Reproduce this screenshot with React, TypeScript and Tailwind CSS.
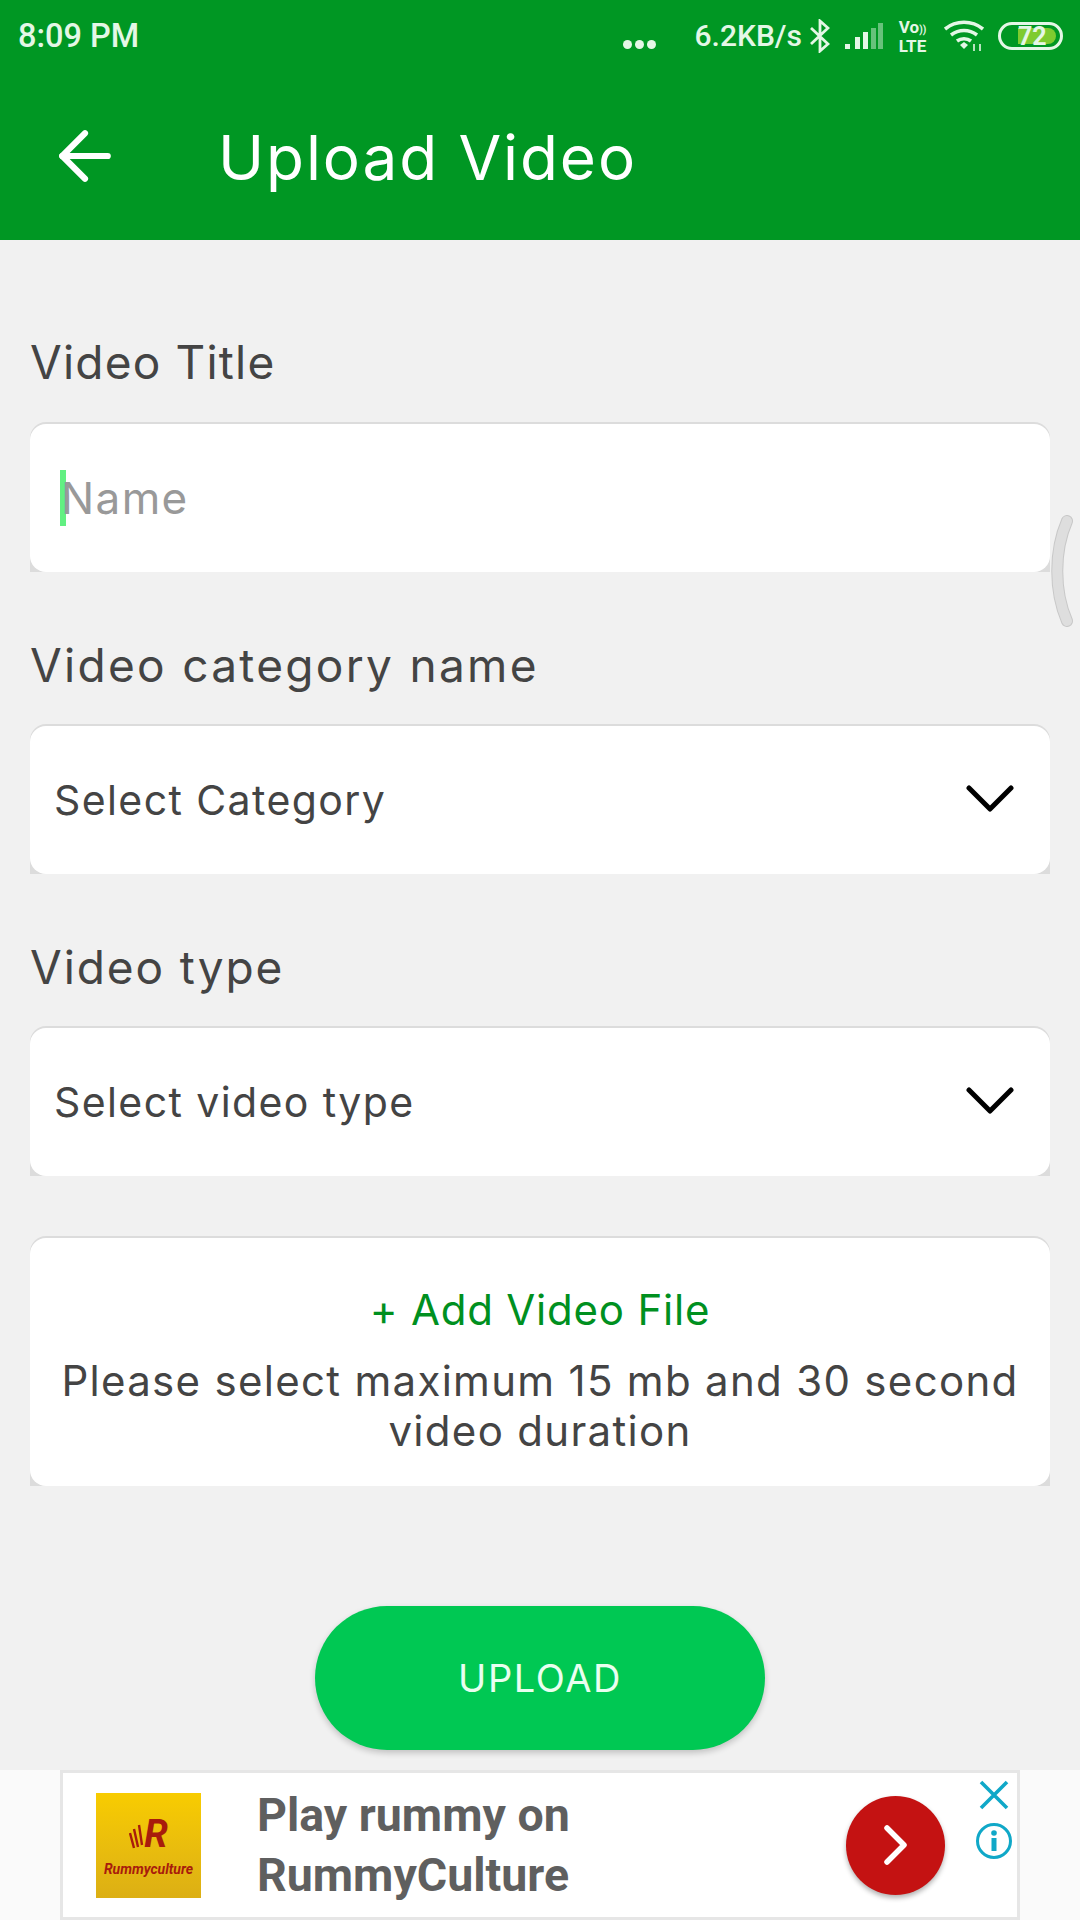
import type { ReactNode } from 'react';
import { ArrowLeft } from 'lucide-react';

const font = "font-['Inter','Liberation_Sans',sans-serif]";

function StatusBar() {
  return (
    <div className="flex h-[72px] items-center pl-[18px] pr-[17px] text-[#e4f7e6]">
      <span className="font-['Roboto',sans-serif] text-[32.5px] font-medium leading-none">8:09 PM</span>
      <div className="ml-auto flex items-center">
        <div className="mr-[39px] mt-[16px] flex gap-[3px]">
          <span className="h-[9px] w-[9px] rounded-full bg-[#e4f7e6]" />
          <span className="h-[9px] w-[9px] rounded-full bg-[#e4f7e6]" />
          <span className="h-[9px] w-[9px] rounded-full bg-[#e4f7e6]" />
        </div>
        <span className="font-['Roboto',sans-serif] text-[30px] font-medium leading-none">6.2KB/s</span>
        <svg className="ml-[8px]" width="20" height="34" viewBox="0 0 20 34" fill="none" stroke="#e4f7e6" strokeWidth="2.8">
          <path d="M1 9l17 16-8 7V2l8 7L1 25" />
        </svg>
        <svg className="ml-[15px]" width="38" height="28" viewBox="0 0 38 28" fill="#e4f7e6">
          <rect x="0" y="22" width="5" height="5" />
          <rect x="10" y="15" width="5" height="12" />
          <rect x="18" y="10" width="5" height="17" />
          <rect x="26" y="6" width="5" height="21" opacity="0.45" />
          <rect x="33" y="1" width="5" height="26" opacity="0.45" />
        </svg>
        <div className="ml-[14px] w-[31px] text-center font-['Roboto',sans-serif] text-[17px] font-bold leading-[16px]">
          <div>
            Vo<span className="text-[10px]">))</span>
          </div>
          <div>LTE</div>
        </div>
        <svg className="ml-[16px]" width="40" height="32" viewBox="0 0 40 32" fill="none" stroke="#e4f7e6" strokeWidth="3.6">
          <path d="M1 9c11-9 27-9 38 0" />
          <path d="M7 15c8-6 18-6 26 0" />
          <path d="M13 21c4-3 10-3 14 0" />
          <path d="M16 25l4 4 4-4-4-3z" fill="#e4f7e6" stroke="none" />
          <path d="M30 24v7M36 24v7" strokeWidth="1.6" />
        </svg>
        <div className="relative ml-[14px] flex h-[28px] w-[65px] items-center rounded-full border-[3px] border-[#e4f7e6] p-[3px]">
          <div className="ml-[14px] h-full w-[38px] rounded-r-full bg-[#7ecb2f]" />
          <span className="absolute left-[17px] top-[-2px] font-['Roboto',sans-serif] text-[25px] font-bold leading-[27px]">72</span>
        </div>
      </div>
    </div>
  );
}

// grey wrapper only shows as the top hairline and the bottom corners
function Card({ children }: { children: ReactNode }) {
  return (
    <div className="rounded-t-[16px] bg-[#dcdcdc] pt-[2px]">
      <div className="rounded-[16px] bg-white">{children}</div>
    </div>
  );
}

function SelectCard({ label }: { label: string }) {
  return (
    <Card>
      <div className="flex h-[148px] items-center justify-between pl-[24px] pr-[36px]">
        <span className="text-[41px] leading-none tracking-[1.4px] text-[#444444]">{label}</span>
        <svg className="mb-[4px]" width="48" height="30" viewBox="0 0 48 30" fill="none" stroke="black" strokeWidth="5" strokeLinecap="round" strokeLinejoin="round">
          <path d="M3 5l21 21L45 5" />
        </svg>
      </div>
    </Card>
  );
}

export default function App() {
  return (
    <div className={`${font} relative flex h-[1920px] w-[1080px] flex-col overflow-hidden bg-[#f1f1f1]`}>
      {/* Header */}
      <div className="h-[240px] bg-[#009723]">
        <StatusBar />
        <div className="flex h-[168px] items-center pl-[46px]">
          <ArrowLeft size={78} strokeWidth={1.9} className="text-white" />
          <h1 className="ml-[94px] pt-[4px] text-[62px] font-normal leading-none tracking-[1.9px] text-white">Upload Video</h1>
        </div>
      </div>

      {/* Form */}
      <div className="flex flex-1 flex-col px-[30px]">
        <p className="mt-[110px] h-[72px] text-[46px] leading-[24px] tracking-[1.2px] text-[#444444]">Video Title</p>
        <Card>
          <div className="flex h-[148px] items-center pl-[30px]">
            <div className="h-[56px] w-[6px] bg-[#62f082]" />
            <span className="ml-[-5px] text-[44px] leading-none tracking-[1.4px] text-[#999999]">Name</span>
          </div>
        </Card>

        <p className="mt-[80px] h-[72px] text-[46px] leading-[26px] tracking-[2.3px] text-[#444444]">Video category name</p>
        <SelectCard label="Select Category" />

        <p className="mt-[80px] h-[72px] text-[46px] leading-[26px] tracking-[1.9px] text-[#444444]">Video type</p>
        <SelectCard label="Select video type" />

        <div className="mt-[60px]">
          <Card>
            <div className="flex h-[248px] flex-col items-center pt-[47px] text-center">
              <span className="text-[42px] leading-[50px] tracking-[0.8px] text-[#00901f]">+ Add Video File</span>
              <p className="mt-[21px] w-[980px] text-[42px] leading-[50px] tracking-[1.3px] text-[#444444]">
                Please select maximum 15 mb and 30 second video duration
              </p>
            </div>
          </Card>
        </div>

        <button className="mx-auto mt-[120px] h-[144px] w-[450px] rounded-full bg-[#00c853] text-[38px] font-normal tracking-[1.6px] text-[#e9fff0] shadow-[0_3px_6px_rgba(0,0,0,0.2)]">
          UPLOAD
        </button>
      </div>

      {/* Ad */}
      <div className="h-[150px] bg-[#fafafa] px-[60px]">
        <div className="flex h-full items-center border-[3px] border-[#e6e6e6] bg-white pl-[33px] pr-[4px]">
          <div className="flex h-[105px] w-[105px] flex-col items-center bg-gradient-to-b from-[#f8cc00] to-[#dcaf14] pt-[24px] font-['Roboto',sans-serif] italic text-[#a81c0c]">
            <div className="flex h-[34px] items-end">
              <svg width="15" height="27" viewBox="0 0 15 27" fill="none" stroke="#a81c0c" strokeWidth="2.4">
                <path d="M1 9l4 15M5 5l4 18M10 1l3 20" />
              </svg>
              <span className="text-[38px] font-bold leading-[34px]">R</span>
            </div>
            <div className="mt-[11px] text-[14px] font-bold leading-[14px]">Rummyculture</div>
          </div>
          <div className="ml-[56px] font-['Roboto',sans-serif] text-[46.5px] font-bold leading-[60px] text-[#5f5f5f]">
            <p>Play rummy on</p>
            <p>RummyCulture</p>
          </div>
          <div className="ml-auto mr-[30px] flex h-[99px] w-[99px] items-center justify-center rounded-full bg-[#c41212] shadow-[0_3px_5px_rgba(0,0,0,0.3)]">
            <svg width="30" height="42" viewBox="0 0 30 42" fill="none" stroke="white" strokeWidth="5.5" strokeLinecap="round" strokeLinejoin="round">
              <path d="M6 4l17 17L6 38" />
            </svg>
          </div>
          <div className="mt-[7px] flex flex-col items-center self-start text-[#10a8c8]">
            <svg width="30" height="30" viewBox="0 0 30 30" fill="none" stroke="currentColor" strokeWidth="3.6">
              <path d="M2 2l26 26M28 2L2 28" />
            </svg>
            <svg className="mt-[12px]" width="38" height="38" viewBox="0 0 38 38" fill="none" stroke="currentColor">
              <circle cx="19" cy="19" r="16.5" strokeWidth="3" />
              <circle cx="19" cy="11" r="2.8" fill="currentColor" stroke="none" />
              <rect x="16.5" y="16" width="5" height="13" fill="currentColor" stroke="none" />
            </svg>
          </div>
        </div>
      </div>

      {/* Edge handle */}
      <svg className="absolute left-[1048px] top-[515px]" width="26" height="112" viewBox="0 0 26 112" fill="none">
        <path d="M19 6C6 36 6 76 19 106" stroke="#c8c8c8" strokeWidth="12" strokeLinecap="round" />
        <path d="M19 6C6 36 6 76 19 106" stroke="#dedede" strokeWidth="10" strokeLinecap="round" />
      </svg>
    </div>
  );
}
